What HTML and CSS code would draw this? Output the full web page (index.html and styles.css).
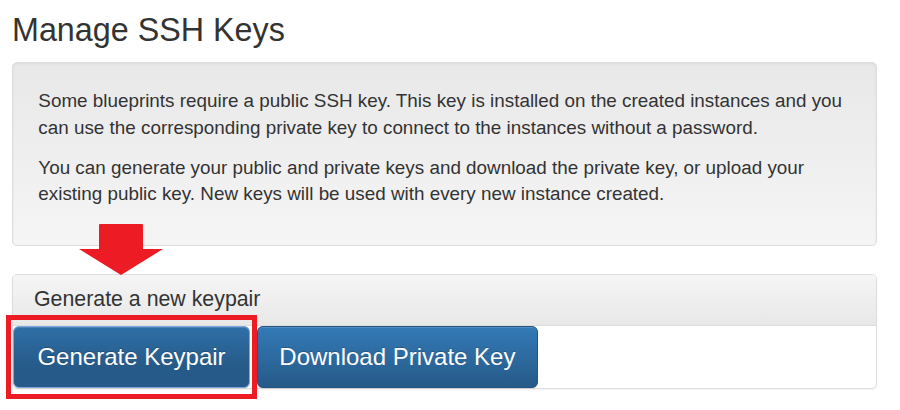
FILE: index.html
```html
<!DOCTYPE html>
<html lang="en">
<head>
<meta charset="utf-8">
<title>Manage SSH Keys</title>
<link rel="stylesheet" href="styles.css">
</head>
<body>
<div class="page">
  <h3 class="title">Manage SSH Keys</h3>
  <div class="well">
    <p>Some blueprints require a public SSH key. This key is installed on the created instances and you can use the corresponding private key to connect to the instances without a password.</p>
    <p>You can generate your public and private keys and download the private key, or upload your existing public key. New keys will be used with every new instance created.</p>
  </div>
  <div class="panel">
    <div class="panel-heading">Generate a new keypair</div>
    <div class="panel-body">
      <button class="btn btn-primary btn-focus" type="button">Generate Keypair</button>
      <button class="btn btn-primary" type="button">Download Private Key</button>
    </div>
  </div>

  <svg class="annot-arrow" width="84" height="52" viewBox="0 0 84 52" aria-hidden="true">
    <path d="M21 0 H63 Q64 0 64 1 V25 H84 L42 51 L0 25 H20 V1 Q20 0 21 0 Z" fill="#ed1c24"/>
  </svg>
  <div class="annot-box"></div>
</div>
</body>
</html>
```
FILE: styles.css
```css
html, body {
  margin: 0;
  padding: 0;
  background: #fff;
}

body {
  font-family: "Liberation Sans", Arial, sans-serif;
  font-size: 18.85px;
  line-height: 26.67px;
  color: #333;
}

.page {
  position: relative;
  box-sizing: border-box;
  width: 877px;
  min-height: 410px;
  padding-left: 12px;
  padding-top: 13px;
}

.title {
  margin: 0 0 13.5px 0;
  font-size: 32.3px;
  font-weight: 500;
  line-height: 35.2px;
  color: #333;
}

.well {
  box-sizing: border-box;
  height: 184px;
  padding: 25.33px 25.33px;
  border: 1px solid #dcdcdc;
  border-radius: 5px;
  background-color: #f5f5f5;
  background-image: linear-gradient(to bottom, #e8e8e8 0, #f5f5f5 100%);
  box-shadow: inset 0 1px 3px rgba(0, 0, 0, .05), 0 1px 0 rgba(255, 255, 255, .1);
  margin-bottom: 28px;
}

.well p {
  margin: 0 0 13.33px 0;
}

.panel {
  border: 1px solid #ddd;
  border-radius: 5px;
  background: #fff;
  box-shadow: 0 1px 2px rgba(0, 0, 0, .05);
}

.panel-heading {
  box-sizing: border-box;
  height: 51px;
  padding: 10px 21px 0;
  font-size: 21.33px;
  line-height: 29px;
  border-bottom: 1px solid #ddd;
  border-radius: 4px 4px 0 0;
  background-color: #f5f5f5;
  background-image: linear-gradient(to bottom, #f5f5f5 0, #e8e8e8 100%);
  color: #333;
}

.panel-body {
  display: flex;
  gap: 7px;
  padding: 0;
}

.btn {
  box-sizing: border-box;
  height: 62px;
  padding: 0 21.33px;
  font-family: "Liberation Sans", Arial, sans-serif;
  font-size: 24px;
  line-height: 32px;
  border: 1px solid transparent;
  border-radius: 6px;
  cursor: pointer;
}

.btn-primary {
  color: #fff;
  text-shadow: 0 -1px 0 rgba(0, 0, 0, .2);
  background-color: #265a88;
  background-image: linear-gradient(to bottom, #337ab7 0, #265a88 100%);
  background-repeat: repeat-x;
  border-color: #245580;
  box-shadow: inset 0 1px 0 rgba(255, 255, 255, .15), 0 1px 1px rgba(0, 0, 0, .075);
}

.btn-focus {
  width: 237px;
  background-position: 0 -20px;
  border-color: #7ea6e0;
}

.annot-arrow {
  position: absolute;
  left: 79px;
  top: 224px;
}

.annot-box {
  position: absolute;
  left: 6px;
  top: 315px;
  width: 251px;
  height: 84px;
  box-sizing: border-box;
  border: 5px solid #ed1c24;
}
```
